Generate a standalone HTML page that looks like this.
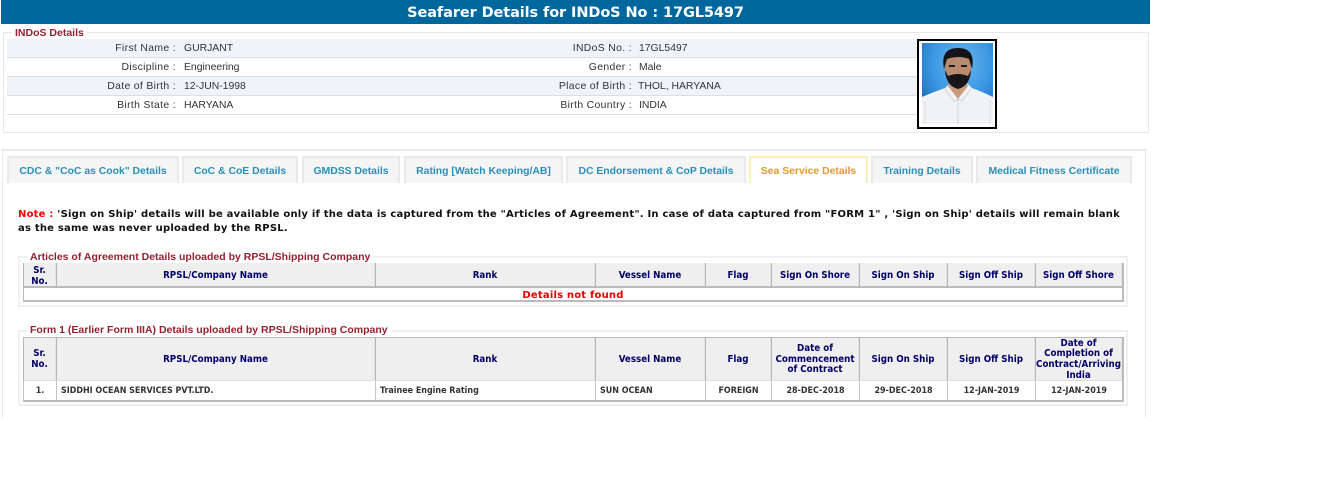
<!DOCTYPE html>
<html><head><meta charset="utf-8">
<style>
html,body{margin:0;padding:0;background:#fff;width:1324px;height:497px;overflow:hidden}
div{position:absolute;box-sizing:border-box}
.lb{font:10.4px "Liberation Sans",Arial,sans-serif;color:#333;white-space:nowrap;text-align:right;height:18px;line-height:18px;letter-spacing:.35px}
.v{font:10.4px "Liberation Sans",Arial,sans-serif;color:#333;white-space:nowrap;height:18px;line-height:18px}
.row{left:7px;width:910px;height:19px;border-bottom:1px solid #d9dfe6}
.tab{top:156px;height:27px;background:#f5f5f5;border:2px solid #e9e9e9;border-bottom:0;color:#2b8fb9;font:bold 10.4px/27px "Liberation Sans",Arial,sans-serif;text-align:center;white-space:nowrap}
.fs{border:2px solid #f0f0f0}
.lg{background:#fff;padding:0 3px;color:#96202f;font:bold 10.5px/12px "Liberation Sans",Arial,sans-serif;white-space:nowrap}
.h{background:#efefef;border-left:1px solid #b4b4b4;border-right:1px solid #e4e4e4;padding-top:3px;display:flex;align-items:center;justify-content:center;text-align:center;color:#000066;font:bold 9.7px/10.7px "DejaVu Sans Condensed","DejaVu Sans",sans-serif;font-stretch:condensed}
.f{padding-top:1px}
.c{border-left:1px solid #c4c4c4;display:flex;align-items:center;justify-content:center;color:#333;font:bold 8.9px/12px "DejaVu Sans Condensed","DejaVu Sans",sans-serif;font-stretch:condensed;white-space:nowrap}
.l{justify-content:flex-start;padding-left:4px}
</style></head><body>

<div style="left:1px;top:0;width:1149px;height:24px;background:#00679c;color:#fff;font:bold 14.5px/27px 'DejaVu Sans',sans-serif;letter-spacing:-.1px;text-align:center;white-space:nowrap">Seafarer Details for INDoS No : 17GL5497</div>

<div class="fs" style="left:3px;top:32px;width:1146px;height:101px;border-width:1px;border-color:#e8e8e8"></div>
<div class="lg" style="left:12px;top:27px">INDoS Details</div>

<div class="row" style="top:39px;background:#eff4fb"></div>
<div class="row" style="top:58px"></div>
<div class="row" style="top:77px;background:#eff4fb"></div>
<div class="row" style="top:96px"></div>

<div class="lb" style="left:60px;width:116px;top:40px">First Name :</div><div class="v" style="left:184px;top:40px">GURJANT</div>
<div class="lb" style="left:60px;width:116px;top:59px">Discipline :</div><div class="v" style="left:184px;top:59px">Engineering</div>
<div class="lb" style="left:60px;width:116px;top:78px">Date of Birth :</div><div class="v" style="left:184px;top:78px">12-JUN-1998</div>
<div class="lb" style="left:60px;width:116px;top:97px">Birth State :</div><div class="v" style="left:184px;top:97px">HARYANA</div>

<div class="lb" style="left:510px;width:122px;top:40px">INDoS No. :</div><div class="v" style="left:639px;top:40px">17GL5497</div>
<div class="lb" style="left:510px;width:122px;top:59px">Gender :</div><div class="v" style="left:639px;top:59px">Male</div>
<div class="lb" style="left:510px;width:122px;top:78px">Place of Birth :</div><div class="v" style="left:638px;top:78px">THOL, HARYANA</div>
<div class="lb" style="left:510px;width:122px;top:97px">Birth Country :</div><div class="v" style="left:639px;top:97px">INDIA</div>

<svg style="position:absolute;left:917px;top:39px" width="80" height="90" viewBox="0 0 80 90">
<defs><radialGradient id="b" cx=".55" cy=".25" r=".7"><stop offset="0" stop-color="#6cb6ee"/><stop offset=".6" stop-color="#3a97e2"/><stop offset="1" stop-color="#1f6fc4"/></radialGradient></defs>
<rect width="80" height="90" fill="#000"/>
<rect x="2" y="2" width="76" height="86" fill="#fff"/>
<rect x="5" y="4" width="71" height="81" fill="url(#b)"/>
<path d="M5 85V58Q14 54 28 49L33 44H50L55 49Q68 54 76 58V85Z" fill="#f1f2f5"/>
<path d="M31 47L41 60L51 47L48 40H34Z" fill="#c99a7c"/>
<path d="M41 60V85" stroke="#d5d7dd"/><path d="M28 50L37 62L41 60L45 62L54 50" fill="none" stroke="#cfd1d8"/>
<path d="M8 85V62M73 85V62" stroke="#dcdde3"/>
<ellipse cx="41" cy="28" rx="13" ry="17" fill="#b98b6e"/>
<path d="M27 30Q23 9 41 9Q59 9 55 30L52 20Q42 16 30 20Z" fill="#141318"/>
<path d="M28 31Q29 47 41 50Q53 47 54 31L51 37Q41 33 31 37Z" fill="#17151a"/>
<path d="M32 27H38M44 27H50" stroke="#1c1a1e" stroke-width="2"/>
</svg>

<div style="left:2px;top:149px;width:1144px;height:269px;border:1px solid #e8e8e8;border-bottom:0;border-top-width:2px"></div>

<div class="tab" style="left:7px;width:172px">CDC &amp; "CoC as Cook" Details</div>
<div class="tab" style="left:182px;width:116px">CoC &amp; CoE Details</div>
<div class="tab" style="left:302px;width:98px">GMDSS Details</div>
<div class="tab" style="left:404px;width:159px">Rating [Watch Keeping/AB]</div>
<div class="tab" style="left:566px;width:180px">DC Endorsement &amp; CoP Details</div>
<div class="tab" style="left:749px;width:119px;background:#fff;border-color:#fbeeb8;color:#e39a2d">Sea Service Details</div>
<div class="tab" style="left:871px;width:102px">Training Details</div>
<div class="tab" style="left:976px;width:156px">Medical Fitness Certificate</div>

<div style="left:18px;top:208px;width:1115px;font:bold 10px/14px 'DejaVu Sans',sans-serif;letter-spacing:.22px;color:#111;white-space:nowrap"><span style="color:#f00">Note :</span> 'Sign on Ship' details will be available only if the data is captured from the "Articles of Agreement". In case of data captured from "FORM 1" , 'Sign on Ship' details will remain blank<br>as the same was never uploaded by the RPSL.</div>

<!-- Articles -->
<div class="fs" style="left:18px;top:256px;width:1110px;height:51px"></div>
<div class="lg" style="left:27px;top:251px">Articles of Agreement Details uploaded by RPSL/Shipping Company</div>
<div style="left:23px;top:263px;width:1101px;height:39px;background:#fff;border-style:solid;border-width:0 2px 2px 1px;border-color:#bbb"></div>
<div class="h" style="left:23px;top:263px;width:33px;height:24px">Sr.<br>No.</div>
<div class="h" style="left:56px;top:263px;width:319px;height:24px">RPSL/Company Name</div>
<div class="h" style="left:375px;top:263px;width:220px;height:24px">Rank</div>
<div class="h" style="left:595px;top:263px;width:110px;height:24px">Vessel Name</div>
<div class="h" style="left:705px;top:263px;width:66px;height:24px">Flag</div>
<div class="h" style="left:771px;top:263px;width:88px;height:24px">Sign On Shore</div>
<div class="h" style="left:859px;top:263px;width:88px;height:24px">Sign On Ship</div>
<div class="h" style="left:947px;top:263px;width:88px;height:24px">Sign Off Ship</div>
<div class="h" style="left:1035px;top:263px;width:87px;height:24px">Sign Off Shore</div>
<div style="left:23px;top:286px;width:1101px;height:2px;background:#bbb"></div>
<div style="left:24px;top:290px;width:1098px;height:12px;text-align:center;color:#e00000;font:bold 10px/12px 'DejaVu Sans',sans-serif;letter-spacing:.2px">Details not found</div>

<!-- Form 1 -->
<div class="fs" style="left:18px;top:330px;width:1110px;height:76px"></div>
<div class="lg" style="left:27px;top:324px">Form 1 (Earlier Form IIIA) Details uploaded by RPSL/Shipping Company</div>
<div style="left:23px;top:337px;width:1101px;height:65px;background:#fff;border-style:solid;border-width:1px 2px 2px 1px;border-color:#bbb"></div>
<div class="h f" style="left:23px;top:338px;width:33px;height:43px">Sr.<br>No.</div>
<div class="h f" style="left:56px;top:338px;width:319px;height:43px">RPSL/Company Name</div>
<div class="h f" style="left:375px;top:338px;width:220px;height:43px">Rank</div>
<div class="h f" style="left:595px;top:338px;width:110px;height:43px">Vessel Name</div>
<div class="h f" style="left:705px;top:338px;width:66px;height:43px">Flag</div>
<div class="h f" style="left:771px;top:338px;width:88px;height:43px">Date of<br>Commencement<br>of Contract</div>
<div class="h f" style="left:859px;top:338px;width:88px;height:43px">Sign On Ship</div>
<div class="h f" style="left:947px;top:338px;width:88px;height:43px">Sign Off Ship</div>
<div class="h f" style="left:1035px;top:338px;width:87px;height:43px">Date of<br>Completion of<br>Contract/Arriving<br>India</div>
<div style="left:24px;top:380px;width:1098px;height:1px;background:#ddd"></div>
<div class="c" style="left:23px;top:381px;width:33px;height:19px">1.</div>
<div class="c l" style="left:56px;top:381px;width:319px;height:19px">SIDDHI OCEAN SERVICES PVT.LTD.</div>
<div class="c l" style="left:375px;top:381px;width:220px;height:19px">Trainee Engine Rating</div>
<div class="c l" style="left:595px;top:381px;width:110px;height:19px">SUN OCEAN</div>
<div class="c" style="left:705px;top:381px;width:66px;height:19px">FOREIGN</div>
<div class="c" style="left:771px;top:381px;width:88px;height:19px">28-DEC-2018</div>
<div class="c" style="left:859px;top:381px;width:88px;height:19px">29-DEC-2018</div>
<div class="c" style="left:947px;top:381px;width:88px;height:19px">12-JAN-2019</div>
<div class="c" style="left:1035px;top:381px;width:87px;height:19px">12-JAN-2019</div>

</body></html>
